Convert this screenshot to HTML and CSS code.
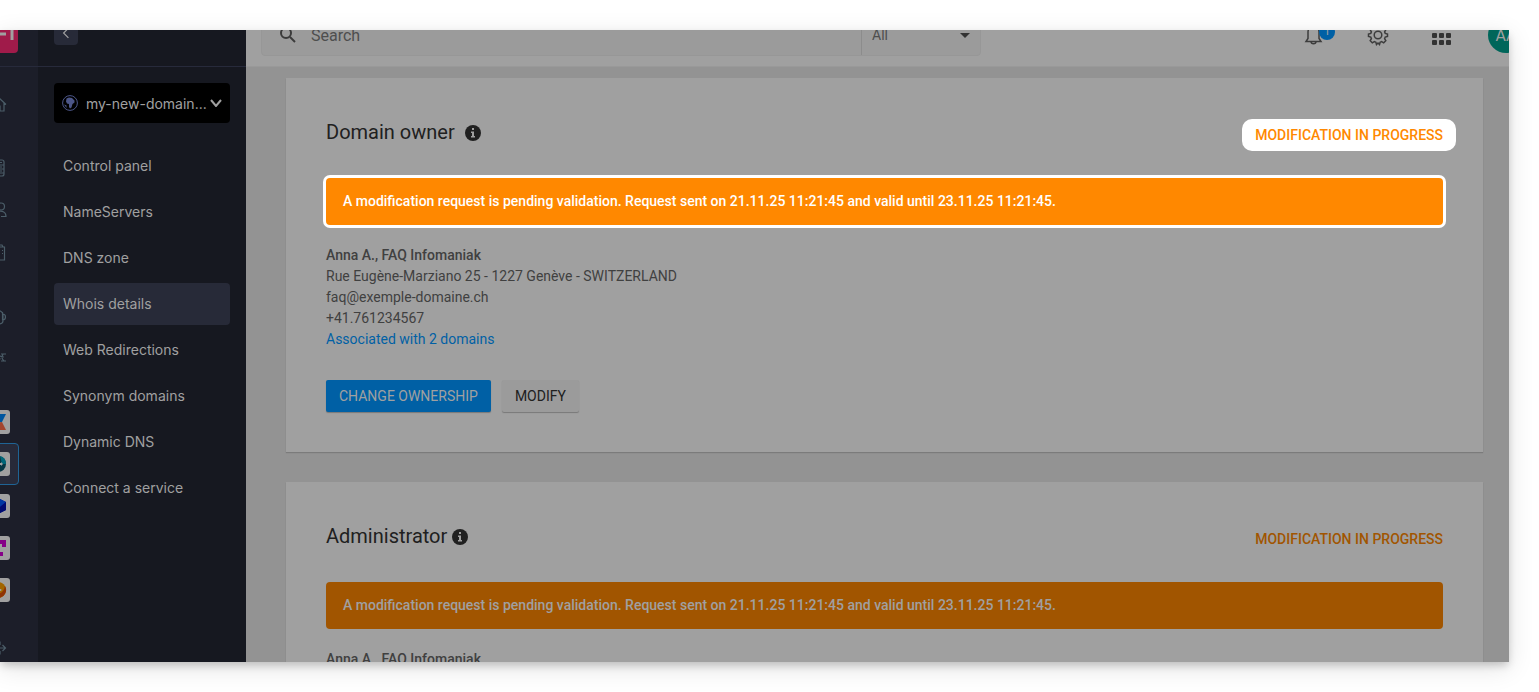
FILE: index.html
```html
<!DOCTYPE html>
<html lang="en">
<head>
<meta charset="utf-8">
<title>Whois details</title>
<link rel="stylesheet" href="styles.css">
</head>
<body>
<div class="frame">
<div class="app">
  <nav class="rail" aria-label="Products">
    <div class="rail-head"><svg class="logo" viewBox="0 0 40 40" aria-hidden="true"><rect width="40" height="40" rx="4"/><path d="M8 10v19M14 10v19M20 21h8M34 8v19"/></svg></div>
    <div class="rail-group">
      <a class="rail-item" href="#" aria-label="Home"><svg class="line" viewBox="0 0 18 18"><path d="M1.500 9.500 9 2l8 7.500M3.500 8v8h4v-5h3.500v5h4V8"/></svg></a>
    </div>
    <div class="rail-group">
      <a class="rail-item" href="#" aria-label="Hosting"><svg class="line" viewBox="0 0 18 18"><rect x="3" y="1" width="12" height="16" rx="2"/><path d="M3 6h12M3 10h12M3 14h12M11 3.500h2M11 8h2M11 12h2"/></svg></a>
      <a class="rail-item" href="#" aria-label="Users"><svg class="line" viewBox="0 0 18 18"><circle cx="12" cy="5.500" r="3.500"/><path d="M8 11c5-2 9 0 9 4.500h-5M6 2a4 4 0 1 0 0 7M1 16c0-4 2-6 5-6"/></svg></a>
      <a class="rail-item" href="#" aria-label="Company"><svg class="line" viewBox="0 0 18 18"><path d="M7 4h8.500v13H2V8h5zM8 4V2h5l1 2M10 7.500h1M13 7.500h1M10 10.500h1M13 10.500h1"/></svg></a>
    </div>
    <div class="rail-group">
      <a class="rail-item" href="#" aria-label="Support"><svg class="line" viewBox="0 0 18 18"><path d="M3 7a6 6 0 0 1 11 0v7c0 2-2 3-5 3M3 7v6c-3 0-3-5 0-6M13.500 5v8c4 0 4-6 0-6"/></svg></a>
      <a class="rail-item" href="#" aria-label="Partners"><svg class="line" viewBox="0 0 18 18"><path d="M2 5h6l3 5-2 2H2M12 5h5M12 12h5M14 5c-1 3-2 4 1 7M10 7l5 1"/></svg></a>
    </div>
    <div class="rail-group">
      <a class="rail-item" href="#" aria-label="kSuite"><svg class="tile" viewBox="0 0 24 24"><rect width="24" height="24" rx="3"/><path d="M5 4h15l-4 8-11 1z" fill="#00569f"/><path d="M5 14l11-2 4 8H5z" fill="#a3452f"/></svg></a>
      <a class="rail-item current" href="#" aria-label="Domains"><svg class="tile" viewBox="0 0 24 24"><rect width="24" height="24" rx="3"/><circle cx="12" cy="12" r="8" fill="#073744"/><path d="M14 4a8 8 0 0 1 6 8h-4z" fill="#006779"/><path d="M13 11h2v-1l2 2-2 2v-1h-2z" fill="#a0a0a0"/></svg></a>
      <a class="rail-item" href="#" aria-label="Cloud"><svg class="tile" viewBox="0 0 24 24"><rect width="24" height="24" rx="3"/><path d="M12 4l8 4v8l-8 4-7-4V8z" fill="#001294"/><path d="M12 4l8 4-6 5-9-5z" fill="#0038a2"/><path d="M14 13l6-5v8l-8 4z" fill="#000c70"/></svg></a>
      <a class="rail-item" href="#" aria-label="Events"><svg class="tile" viewBox="0 0 24 24"><rect width="24" height="24" rx="3"/><path d="M5 4h15v7h-4V8H9v12H5zM11 16h6v4h-6z" fill="#860087"/></svg></a>
      <a class="rail-item" href="#" aria-label="Ticketing"><svg class="tile" viewBox="0 0 24 24"><rect width="24" height="24" rx="3"/><circle cx="12" cy="12" r="8" fill="#a16500"/><path d="M12 20a8 8 0 0 0 7-12c-1 5-3 7-7 8z" fill="#8f3305"/><circle cx="14.500" cy="12" r="1" fill="#a0a0a0"/></svg></a>
    </div>
    <div class="rail-group last">
      <a class="rail-item" href="#" aria-label="Collapse"><svg class="line" viewBox="0 0 18 18"><path d="M7 9h9.500M13.500 6l3 3-3 3M11 6V3H7M11 12v3H7"/></svg></a>
    </div>
  </nav>

  <aside class="sidebar">
    <div class="sidebar-head"><button class="back" aria-label="Back"><svg viewBox="0 0 10 10"><path d="M7 1 3 5l4 4"/></svg></button></div>
    <div class="sidebar-body">
      <button class="domain">
        <svg class="globe" viewBox="0 0 16 16" aria-hidden="true"><circle cx="8" cy="8" r="7.400"/><path d="M4.500 3.500 7 2.500l3 .5 2.500 2.500v2l-2 1.500-1 3.500-1.500 1-1-1.500V9L5 8.500 4 6.500z"/><path d="M2 9.500l2.500 1V13z"/></svg>
        <span>my-new-domain...</span>
        <svg class="chevron" viewBox="0 0 12 8" aria-hidden="true"><path d="M1 1l5 6 5-6"/></svg>
      </button>
      <nav class="menu" aria-label="Domain">
        <a href="#">Control panel</a>
        <a href="#">NameServers</a>
        <a href="#">DNS zone</a>
        <a href="#" class="selected" aria-current="page">Whois details</a>
        <a href="#">Web Redirections</a>
        <a href="#">Synonym domains</a>
        <a href="#">Dynamic DNS</a>
        <a href="#">Connect a service</a>
      </nav>
    </div>
  </aside>

  <div class="main">
    <header class="topbar">
      <form class="search">
        <svg class="lens" viewBox="0 0 18 18" aria-hidden="true"><circle cx="7" cy="7" r="5"/><path d="M11 11l5 5"/></svg>
        <input type="search" placeholder="Search" aria-label="Search">
        <div class="scope">
          <select aria-label="Search in"><option>All</option></select>
          <svg class="caret" viewBox="0 0 10 5" aria-hidden="true"><path d="M0 0h10L5 5z"/></svg>
        </div>
      </form>
      <div class="actions">
        <button class="icon" aria-label="Notifications"><svg viewBox="0 0 24 24"><path d="M4 18.500h15l-2-3V9c0-7-11-7-11 0v6.500zM9 18.500c0 3 5 3 5 0"/></svg><span class="count">1</span></button>
        <button class="icon" aria-label="Settings"><svg viewBox="0 0 24 24"><circle cx="12" cy="12" r="3.800"/><path d="M10.500 3h3l.6 2.300 1.500.6 2.100-1.200 2.100 2.100-1.200 2.100.6 1.500 2.300.6v2.500l-2.300.6-.6 1.500 1.200 2.100-2.100 2.100-2.100-1.200-1.500.6-.6 2.300-1.500-1.500-1.500 1.500-.6-2.300-1.500-.6-2.100 1.200-2.100-2.100 1.200-2.100-.6-1.500-2.300-.6V11l2.300-.6.6-1.500-1.200-2.100 2.100-2.100 2.100 1.200 1.500-.6z"/></svg></button>
        <button class="icon" aria-label="Applications"><svg class="dots" viewBox="0 0 24 24"><rect x="2" y="2" width="5" height="5" rx="1"/><rect x="9" y="2" width="5" height="5" rx="1"/><rect x="16" y="2" width="5" height="5" rx="1"/><rect x="2" y="10" width="5" height="5" rx="1"/><rect x="9" y="10" width="5" height="5" rx="1"/><rect x="16" y="10" width="5" height="5" rx="1"/><rect x="2" y="17" width="5" height="5" rx="1"/><rect x="9" y="17" width="5" height="5" rx="1"/><rect x="16" y="17" width="5" height="5" rx="1"/></svg></button>
        <button class="avatar" aria-label="Account">AA</button>
      </div>
    </header>

    <main class="content">
      <section class="card">
        <div class="card-head">
          <h2 class="spaced">Domain owner <svg class="info" viewBox="0 0 16 16" aria-hidden="true"><circle cx="8" cy="8" r="8"/><path d="M7 3h2v2H7zM6 6.500h3V11h1v1.500H6V11h1V8H6z"/></svg></h2>
          <span class="status lit">MODIFICATION IN PROGRESS</span>
        </div>
        <p class="alert lit">A modification request is pending validation. Request sent on 21.11.25 11:21:45 and valid until 23.11.25 11:21:45.</p>
        <address>
          <strong>Anna A., FAQ Infomaniak</strong><br>
          Rue Eugène-Marziano 25 - 1227 Genève - SWITZERLAND<br>
          faq@exemple-domaine.ch<br>
          +41.761234567<br>
          <a href="#">Associated with 2 domains</a>
        </address>
        <div class="buttons">
          <button class="btn primary">CHANGE OWNERSHIP</button>
          <button class="btn">MODIFY</button>
        </div>
      </section>

      <section class="card">
        <div class="card-head">
          <h2>Administrator <svg class="info" viewBox="0 0 16 16" aria-hidden="true"><circle cx="8" cy="8" r="8"/><path d="M7 3h2v2H7zM6 6.500h3V11h1v1.500H6V11h1V8H6z"/></svg></h2>
          <span class="status">MODIFICATION IN PROGRESS</span>
        </div>
        <p class="alert">A modification request is pending validation. Request sent on 21.11.25 11:21:45 and valid until 23.11.25 11:21:45.</p>
        <address>
          <strong>Anna A., FAQ Infomaniak</strong>
        </address>
      </section>
    </main>
  </div>
</div>
</div>
</body>
</html>
```

FILE: styles.css
```css
* { box-sizing: border-box; }

body {
  margin: 0;
  height: 100vh;
  padding: 30px 30px 30px 0;
  background: #fff;
  font-family: Roboto, "Liberation Sans", sans-serif;
  font-size: 14px;
  overflow: hidden;
}

button, input, select {
  font: inherit;
  color: inherit;
  border: 0;
  padding: 0;
  background: none;
}

a { color: inherit; text-decoration: none; }

svg { flex: none; display: block; }

/* The frame crops the top and left edges of the application. */
.frame {
  height: 100%;
  overflow: hidden;
  box-shadow: 0 4px 8px -1px rgba(0, 0, 0, .2), 0 6px 24px rgba(0, 0, 0, .12);
}

.app {
  display: flex;
  min-height: 100vh;
  margin: -30px 0 0 -42px;
  background: #939393;
}

/* Product rail */
.rail { flex: 0 0 80px; background: #1c1e29; }

.rail-head, .sidebar-head {
  height: 67px;
  border-bottom: 1px solid #272a3b;
  display: flex;
  align-items: center;
}
.rail-head { justify-content: center; }

.logo { width: 40px; height: 40px; }
.logo rect { fill: #a01b4a; }
.logo path { fill: none; stroke: #a0a0a0; stroke-width: 3; }

.rail-group {
  display: flex;
  flex-direction: column;
  align-items: center;
  margin-bottom: 22px;
}
.rail-head + .rail-group { margin-top: 16px; }
.rail-group.last { margin-top: -6px; }

.rail-item {
  width: 42px;
  height: 42px;
  display: grid;
  place-items: center;
  border: 1px solid transparent;
  border-radius: 4px;
}
.rail-item.current { background: #272a39; border-color: #1f6495; }

.line { width: 18px; height: 18px; fill: none; stroke: #4b5d68; stroke-width: 1.2; }
.tile { width: 24px; height: 24px; }
.tile rect { fill: #a0a0a0; }

/* Sidebar */
.sidebar { flex: 0 0 208px; min-width: 0; background: #161820; color: #a0a0a0; }
.sidebar-head { padding-left: 16px; }
.sidebar-body { padding: 16px; }

.back {
  width: 24px;
  height: 24px;
  display: grid;
  place-items: center;
  background: #272a38;
  border-radius: 4px;
}
.back svg { width: 12px; height: 12px; fill: none; stroke: #a0a0a0; }

.domain {
  width: 100%;
  height: 40px;
  padding: 0 8px;
  display: flex;
  align-items: center;
  gap: 8px;
  background: #000;
  border-radius: 4px;
  font-family: Inter, "Liberation Sans", sans-serif;
}
.domain span { flex: 1; min-width: 0; text-align: left; white-space: nowrap; }
.globe { width: 16px; height: 16px; fill: #4c5688; }
.globe circle { fill: none; stroke: #4c5688; }
.chevron { width: 12px; height: 8px; fill: none; stroke: #a0a0a0; stroke-width: 2; }

.menu {
  margin-top: 22px;
  display: flex;
  flex-direction: column;
  gap: 4px;
  font-family: Inter, "Liberation Sans", sans-serif;
}
.menu a { padding: 0 9px; line-height: 42px; border-radius: 4px; }
.menu .selected { background: #272a38; }

/* Top bar */
.main { flex: 1; min-width: 0; }

.topbar {
  height: 67px;
  padding: 4px 0 0 15px;
  display: flex;
  align-items: center;
  justify-content: space-between;
  background: #a0a0a0;
  border-bottom: 1px solid #999;
}

.search {
  flex: 0 1 720px;
  height: 42px;
  display: flex;
  align-items: center;
  background: #9b9b9b;
  border: 1px solid #979797;
  border-radius: 4px;
  color: #4e4e4e;
}
.lens { width: 18px; height: 18px; margin: 0 14px 0 17px; fill: none; stroke: #3b3b3b; stroke-width: 2; }
.search input { flex: 1; min-width: 0; height: 40px; font-size: 16px; outline: 0; }
.search input::placeholder { color: #4e4e4e; opacity: 1; }
.scope {
  flex: 0 0 119px;
  height: 40px;
  display: grid;
  grid-template-columns: 1fr 10px;
  align-items: center;
  padding: 0 10px;
  border-left: 1px solid #8c8c8c;
}
.scope select { appearance: none; }
.caret { width: 10px; height: 5px; fill: #333; }

.actions {
  display: flex;
  align-items: center;
  gap: 40px;
  margin-right: -15px;
}
.icon { width: 24px; height: 24px; position: relative; }
.icon svg { width: 24px; height: 24px; fill: none; stroke: #3d3d3d; stroke-width: 1.5; }
.icon .dots { fill: #333; stroke: none; }
.count {
  position: absolute;
  top: 1px;
  right: -9px;
  width: 16px;
  height: 16px;
  border-radius: 8px;
  background: #0060a5;
  color: #a0a0a0;
  font-size: 11px;
  line-height: 16px;
}
.avatar {
  width: 36px;
  height: 36px;
  margin-left: -6px;
  border-radius: 18px;
  background: #00665a;
  color: #a0a0a0;
  font-size: 16px;
}

/* Cards */
.content {
  padding: 11px 26px 40px 40px;
  display: flex;
  flex-direction: column;
  gap: 30px;
}

.card {
  padding: 40px;
  background: #a0a0a0;
  box-shadow: 0 1px 1px rgba(0, 0, 0, .16);
}

.card-head {
  display: flex;
  justify-content: space-between;
  align-items: flex-end;
  margin-bottom: 27px;
}

h2 {
  margin: 0;
  display: flex;
  align-items: center;
  gap: 5px;
  padding-bottom: 4px;
  font-size: 20px;
  font-weight: 400;
  line-height: 29px;
  color: #202020;
}
h2.spaced { gap: 10px; }
.info { width: 16px; height: 16px; fill: #202020; }
.info path { fill: #a0a0a0; }

.status {
  margin-right: -13px;
  padding: 0 13px;
  line-height: 32px;
  border-radius: 10px;
  font-weight: 500;
  color: #a15500;
}
.status.lit { background: #fff; color: #ff8800; }

.alert {
  margin: 0;
  padding: 13px 17px;
  line-height: 21px;
  border-radius: 4px;
  background: #a15500;
  color: #a0a0a0;
  font-weight: 500;
}
.alert.lit {
  background: #ff8800;
  color: #fff;
  box-shadow: 0 0 0 3px #fff;
}

address {
  margin-top: 20px;
  font-style: normal;
  line-height: 21px;
  color: #404040;
}
address strong { font-weight: 500; }
address a { color: #0060a5; }

.buttons { display: flex; gap: 11px; margin-top: 30px; }

.btn {
  height: 32px;
  padding: 0 13px;
  border-radius: 2px;
  background: #9b9b9b;
  color: #202020;
  box-shadow: 0 1px 1px rgba(0, 0, 0, .25);
}
.btn.primary { background: #0060a5; color: #a0a0a0; }
```
